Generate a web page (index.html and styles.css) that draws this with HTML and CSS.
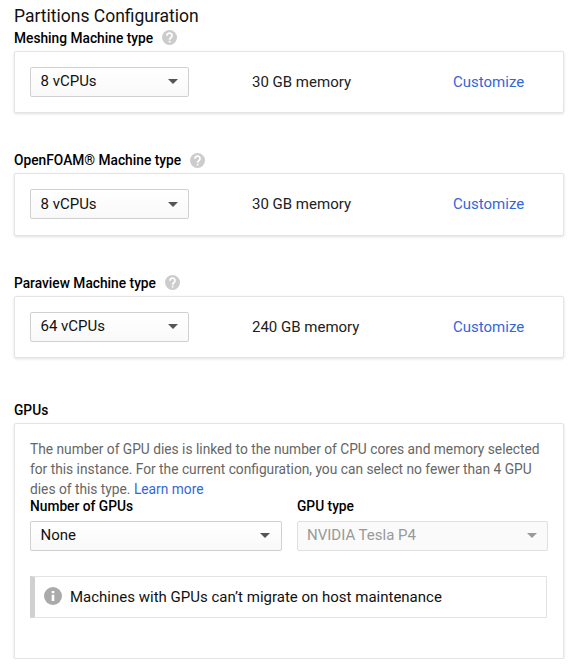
FILE: index.html
```
<!DOCTYPE html>
<html lang="en">
<head>
<meta charset="utf-8">
<title>Partitions Configuration</title>
<link rel="stylesheet" href="styles.css">
</head>
<body>
<svg class="defs" aria-hidden="true">
  <symbol id="help" viewBox="0 0 24 24"><circle cx="12" cy="12" r="12" fill="#ccc"/><path d="M8 9.200a4 4 0 1 1 6.500 2.800C13 13.200 12.200 13.700 12.200 15.600M12.200 17.300v2.700" fill="none" stroke="#fff" stroke-width="2.800"/></symbol>
</svg>
<main class="page">
  <h1 class="title">Partitions Configuration</h1>

  <section class="machine">
    <h2 class="label">Meshing Machine type <svg class="help"><use href="#help"/></svg></h2>
    <div class="card row">
      <div class="select"><span>8 vCPUs</span><svg class="arrow" viewBox="0 0 10 5"><path d="M0 0h10L5 5z"/></svg></div>
      <span class="memory">30 GB memory</span>
      <a class="link">Customize</a>
    </div>
  </section>

  <section class="machine second">
    <h2 class="label">OpenFOAM® Machine type <svg class="help"><use href="#help"/></svg></h2>
    <div class="card row">
      <div class="select"><span>8 vCPUs</span><svg class="arrow" viewBox="0 0 10 5"><path d="M0 0h10L5 5z"/></svg></div>
      <span class="memory">30 GB memory</span>
      <a class="link">Customize</a>
    </div>
  </section>

  <section class="machine third">
    <h2 class="label">Paraview Machine type <svg class="help"><use href="#help"/></svg></h2>
    <div class="card row">
      <div class="select"><span>64 vCPUs</span><svg class="arrow" viewBox="0 0 10 5"><path d="M0 0h10L5 5z"/></svg></div>
      <span class="memory">240 GB memory</span>
      <a class="link">Customize</a>
    </div>
  </section>

  <section class="gpus">
    <h2 class="label">GPUs</h2>
    <div class="card gpu-card">
      <p class="hint">The number of GPU dies is linked to the number of CPU cores and memory selected<br>for this instance. For the current configuration, you can select no fewer than 4 GPU<br>dies of this type. <a class="hint-link">Learn more</a></p>
      <div class="fields">
        <div class="field">
          <h3 class="field-label">Number of GPUs</h3>
          <div class="select"><span>None</span><svg class="arrow" viewBox="0 0 10 5"><path d="M0 0h10L5 5z"/></svg></div>
        </div>
        <div class="field">
          <h3 class="field-label">GPU type</h3>
          <div class="select disabled"><span>NVIDIA Tesla P4</span><svg class="arrow" viewBox="0 0 10 5"><path d="M0 0h10L5 5z"/></svg></div>
        </div>
      </div>
      <div class="notice">
        <svg class="info" viewBox="0 0 18 18"><circle cx="9" cy="9" r="9" fill="#aaa"/><path d="M7.700 4h2.600v2.300H7.700zM7.700 7.800h2.600v6.200H7.700z" fill="#fff"/></svg>
        <span>Machines with GPUs can’t migrate on host maintenance</span>
      </div>
    </div>
  </section>
</main>
</body>
</html>
```
FILE: styles.css
```
* { box-sizing: border-box; }
body {
  margin: 0;
  background: #fff;
  color: #111;
  font-family: Roboto, sans-serif;
  font-size: 15px;
}
h1, h2, h3, p { margin: 0; }
.defs { position: absolute; width: 0; height: 0; }
.page { width: 550px; margin-left: 14px; padding-top: 5px; }
.title { font-size: 17.5px; font-weight: 400; line-height: 22px; height: 22px; }
.label {
  display: flex;
  align-items: center;
  gap: 9px;
  height: 22px;
  font-size: 13.75px;
  font-weight: 500;
  line-height: 22px;
  color: #000;
}
.help { width: 15px; height: 15px; margin-bottom: 1px; }
.card {
  margin-top: 2px;
  border: 1px solid #e4e4e4;
  border-radius: 2px;
  background: #fff;
  box-shadow: 0 1px 3px rgba(0, 0, 0, .12);
}
.row { display: flex; align-items: flex-start; height: 62px; padding: 15px; }
.second { margin-top: 36px; }
.second .row { height: 63px; }
.second .help { margin-bottom: -1px; }
.third { margin-top: 36px; }
.select {
  display: flex;
  align-items: center;
  justify-content: space-between;
  width: 159px;
  height: 30px;
  padding: 0 10px 2px 9.5px;
  border: 1px solid #d0d0d0;
  border-radius: 2px;
  background: linear-gradient(#fff, #f9f9f9);
}
.second .select { padding-bottom: 0; }
.arrow {
  width: 10px;
  height: 5px;
  margin-top: 1px;
  fill: #555;
}
.memory { width: 201px; margin-left: 63px; line-height: 30px; color: #212121; }
.link { line-height: 30px; color: #3367d6; }
.gpus { margin-top: 41px; }
.gpu-card { height: 236px; padding: 15px; }
.hint { font-size: 13.75px; line-height: 20px; color: #666; white-space: nowrap; }
.hint-link { color: #3367d6; }
.fields { display: grid; grid-template-columns: 252px 251px; gap: 15px; }
.fields .select { width: 100%; padding-right: 11px; }
.field-label { height: 22px; font-size: 13.75px; font-weight: 500; line-height: 14px; color: #000; }
.fields .disabled { padding-right: 10px; padding-left: 9px; border-color: #e0e0e0; background: #fafafa; color: #999; }
.disabled .arrow { fill: #999; }
.notice {
  display: flex;
  align-items: center;
  width: 517px;
  height: 42px;
  margin-top: 25px;
  padding-left: 9px;
  border: 1px solid #e3e3e3;
  border-left: 5px solid #d0d0d0;
}
.info { width: 18px; height: 18px; margin: 0 8px 2px 0; }
```
